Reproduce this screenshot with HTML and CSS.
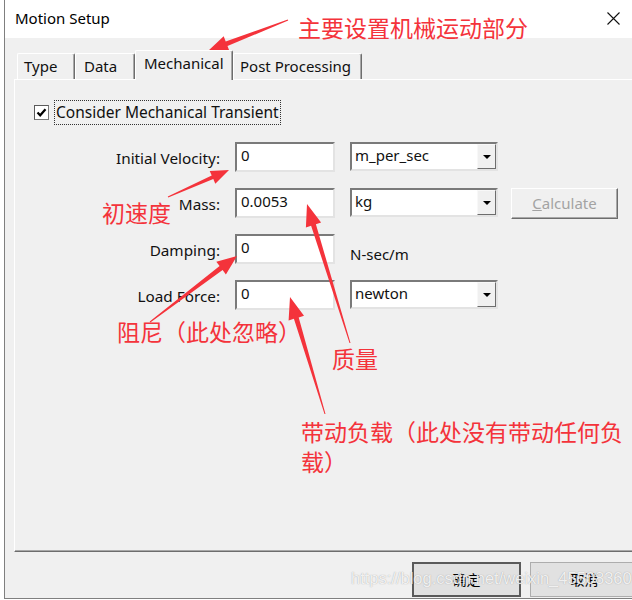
FILE: index.html
```html
<!DOCTYPE html>
<html>
<head>
<meta charset="utf-8">
<link rel="stylesheet" href="styles.css">
</head>
<body>
<div class="window">
  <div class="titlebar">
    <span class="title">Motion Setup</span>
    <svg class="close" width="13" height="13" viewBox="0 0 13 13"><path d="M0.5 0.5 L12.5 12.5 M12.5 0.5 L0.5 12.5" stroke="#111" stroke-width="1.1" fill="none"/></svg>
  </div>
  <div class="client">
    <div class="tabs">
      <div class="tab w-type">Type</div>
      <div class="tab w-data">Data</div>
      <div class="tab active">Mechanical</div>
      <div class="tab w-post">Post Processing</div>
    </div>
    <div class="panel">
      <div class="check-row">
        <span class="checkbox"><svg width="11" height="11" viewBox="0 0 11 11"><path d="M1.5 5.5 L4.2 8.3 L9.5 2.2" stroke="#000" stroke-width="2.2" fill="none"/></svg></span>
        <span class="focus">Consider Mechanical Transient</span>
      </div>
      <div class="form">
        <div class="label">Initial Velocity:</div>
        <div class="edit">0</div>
        <div class="combo"><span class="combo-text">m_per_sec</span><span class="drop"><span class="tri"></span></span></div>
        <div></div>

        <div class="label">Mass:</div>
        <div class="edit">0.0053</div>
        <div class="combo"><span class="combo-text">kg</span><span class="drop"><span class="tri"></span></span></div>
        <div class="calc"><span class="u">C</span>alculate</div>

        <div class="label">Damping:</div>
        <div class="edit">0</div>
        <div class="unit">N-sec/m</div>
        <div></div>

        <div class="label">Load Force:</div>
        <div class="edit">0</div>
        <div class="combo"><span class="combo-text">newton</span><span class="drop"><span class="tri"></span></span></div>
        <div></div>
      </div>
    </div>
    <div class="buttons">
      <div class="btn default">确定</div>
      <div class="btn">取消</div>
    </div>
  </div>
</div>

<div class="watermark">https://blog.csdn.net/weixin_45508360</div>

<svg class="arrows" width="632" height="600" viewBox="0 0 632 600">
  <g fill="#f4333b">
    <polygon points="287.8,19.5 225.7,41.5 223.7,36.3 208,51 229.5,51.3 227.5,46.1 288.2,20.5"/>
    <polygon points="168.2,197.5 213.3,179.1 215.3,183.7 229,170 209.7,170.9 211.7,175.5 167.8,196.5"/>
    <polygon points="150.3,322.4 222.6,270.1 225.9,274.5 237,256 216.3,261.7 219.6,266.1 149.7,321.6"/>
    <polygon points="350.5,342.9 315.9,224.3 321.1,222.6 307,204 305.9,227.4 311.1,225.7 349.5,343.1"/>
    <polygon points="325.5,413.9 298.7,317.4 304.0,315.8 290,297 288.6,320.4 293.9,318.8 324.5,414.1"/>
  </g>
</svg>

<div class="note n-main">主要设置机械运动部分</div>
<div class="note n-vel">初速度</div>
<div class="note n-damp">阻尼（此处忽略）</div>
<div class="note n-mass">质量</div>
<div class="note n-load">带动负载（此处没有带动任何负载）</div>
</body>
</html>
```
FILE: styles.css
```css
html, body {
  margin: 0;
  padding: 0;
}
body {
  width: 632px;
  height: 600px;
  overflow: hidden;
  background: #ffffff;
  position: relative;
  font-family: "Noto Sans", "Noto Sans CJK SC", sans-serif;
  color: #111;
}
.window {
  margin-left: 4px;
  width: 627px;
  height: 598px;
  border-left: 1px solid #7f7f7f;
  border-bottom: 1px solid #7f7f7f;
  background: #f0f0f0;
  display: flex;
  flex-direction: column;
  overflow: hidden;
}
.titlebar {
  height: 38px;
  box-sizing: border-box;
  padding: 0 12px 0 10px;
  background: #ffffff;
  display: flex;
  align-items: center;
  justify-content: space-between;
}
.title {
  font-size: 15px;
  color: #000;
  margin-top: -2px;
}
.close {
  margin-top: -1px;
}
.client {
  display: flex;
  flex-direction: column;
}
.tabs {
  margin-top: 12px;
  padding-left: 12px;
  height: 30px;
  display: flex;
  align-items: flex-end;
  position: relative;
  z-index: 1;
}
.tab {
  box-sizing: border-box;
  height: 26px;
  margin-bottom: 1px;
  border-top: 1px solid #ffffff;
  border-left: 1px solid #ffffff;
  border-right: 1px solid #6d6d6d;
  box-shadow: inset -1px 0 0 #a8a8a8;
  border-radius: 2px 2px 0 0;
  background: #f0f0f0;
  font-size: 15px;
  line-height: 24px;
  padding-left: 6px;
  color: #111;
}
.w-type { width: 58px; }
.w-data { width: 60px; padding-left: 8px; }
.w-post { width: 129px; padding-left: 6px; }
.tab.active {
  width: 98px;
  height: 30px;
  margin-bottom: 0;
  padding-left: 8px;
  line-height: 24px;
}
.panel {
  margin-left: 9px;
  margin-top: -1px;
  height: 473px;
  box-sizing: border-box;
  border-top: 1px solid #ffffff;
  border-left: 1px solid #ffffff;
  border-bottom: 1px solid #6d6d6d;
  box-shadow: inset 0 -1px 0 #a8a8a8;
  display: flex;
  flex-direction: column;
}
.check-row {
  margin-top: 20px;
  height: 25px;
  display: flex;
  align-items: center;
}
.checkbox {
  margin-left: 19px;
  width: 15px;
  height: 15px;
  box-sizing: border-box;
  border: 1px solid #7a7a7a;
  border-top-color: #5a5a5a;
  border-left-color: #5a5a5a;
  background: #ffffff;
  display: flex;
  align-items: center;
  justify-content: center;
}
.focus {
  margin-left: 5px;
  height: 25px;
  box-sizing: border-box;
  border: 1px dotted #333;
  padding: 0 1px;
  font-size: 15.5px;
  line-height: 22px;
  color: #111;
}
.form {
  margin-top: 17px;
  display: grid;
  grid-template-columns: 205px 100px 148px 105px;
  grid-auto-rows: 30px;
  column-gap: 15px;
  row-gap: 16px;
  align-items: center;
}
.label {
  text-align: right;
  font-size: 15.3px;
  color: #111;
  margin-top: 2px;
}
.edit {
  height: 30px;
  box-sizing: border-box;
  border: 2px solid;
  border-color: #7a7a7a #e3e3e3 #e3e3e3 #7a7a7a;
  background: #ffffff;
  font-size: 15px;
  line-height: 22px;
  padding-left: 4px;
  color: #111;
}
.combo {
  align-self: start;
  height: 29px;
  box-sizing: border-box;
  border: 2px solid;
  border-color: #7a7a7a #e3e3e3 #e3e3e3 #7a7a7a;
  background: #ffffff;
  display: flex;
  justify-content: space-between;
  font-size: 15px;
  color: #111;
}
.combo-text {
  padding-left: 3px;
  line-height: 22px;
}
.drop {
  width: 19px;
  height: 25px;
  box-sizing: border-box;
  background: #f0f0f0;
  border: 1px solid;
  border-color: #f8f8f8 #6d6d6d #6d6d6d #f8f8f8;
  display: flex;
  align-items: center;
  justify-content: center;
}
.tri {
  width: 0;
  height: 0;
  border-left: 4px solid transparent;
  border-right: 4px solid transparent;
  border-top: 4px solid #000;
}
.unit {
  align-self: end;
  font-size: 15px;
  color: #111;
  line-height: 20px;
}
.calc {
  align-self: start;
  margin-left: -2px;
  height: 31px;
  box-sizing: border-box;
  border: 1px solid;
  border-color: #ffffff #6d6d6d #6d6d6d #ffffff;
  box-shadow: inset -1px -1px 0 #a8a8a8;
  background: #f0f0f0;
  color: #a3a3a3;
  font-size: 15px;
  line-height: 28px;
  text-align: center;
}
.u {
  text-decoration: underline;
}
.buttons {
  margin-top: 10px;
  padding-left: 407px;
  display: flex;
  gap: 9px;
}
.btn {
  flex: none;
  width: 109px;
  height: 35px;
  box-sizing: border-box;
  border: 1px solid #adadad;
  background: #e1e1e1;
  font-family: "Noto Sans CJK SC", sans-serif;
  font-size: 14px;
  line-height: 33px;
  text-align: center;
  color: #000;
}
.btn.default {
  border: 2px solid #5a5a5a;
  line-height: 31px;
}
.watermark {
  position: absolute;
  left: 351px;
  top: 569px;
  font-family: "Liberation Sans", sans-serif;
  font-size: 16.5px;
  color: rgba(255, 255, 255, 0.85);
  text-shadow: 0 0 1px rgba(120, 120, 120, 0.7);
  white-space: nowrap;
}
.arrows {
  position: absolute;
  left: 0;
  top: 0;
}
.note {
  position: absolute;
  font-family: "Noto Sans CJK SC", sans-serif;
  font-size: 23px;
  line-height: 30px;
  color: #f4333b;
  white-space: nowrap;
}
.n-main { left: 298px; top: 12px; }
.n-vel { left: 102px; top: 197px; }
.n-damp { left: 117px; top: 316px; }
.n-mass { left: 332px; top: 343px; }
.n-load {
  left: 301px;
  top: 416px;
  width: 325px;
  white-space: normal;
}
```
